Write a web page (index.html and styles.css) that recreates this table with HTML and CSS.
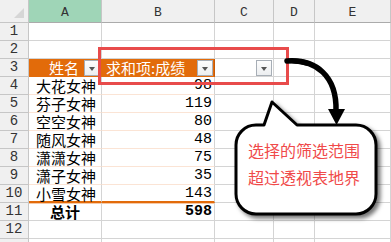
FILE: index.html
```html
<!DOCTYPE html>
<html lang="zh-CN">
<head>
    <meta charset="UTF-8">
    <title>数据透视表</title>
    <link rel="stylesheet" href="styles.css">
</head>
<body>
    <div class="sheet">
        <div class="grid">
            <div class="corner"><span class="select-all"></span></div>
            <div class="col-head active">A</div>
            <div class="col-head">B</div>
            <div class="col-head">C</div>
            <div class="col-head">D</div>
            <div class="col-head">E</div>

            <div class="row-head">1</div><div class="cell"></div><div class="cell"></div><div class="cell"></div><div class="cell"></div><div class="cell"></div>
            <div class="row-head">2</div><div class="cell"></div><div class="cell"></div><div class="cell"></div><div class="cell"></div><div class="cell"></div>

            <div class="row-head">3</div>
            <div class="cell pivot-head name-head">
                <span>姓名</span><span class="drop"></span>
            </div>
            <div class="cell pivot-head sum-head">
                <span>求和项:成绩</span><span class="drop"></span>
            </div>
            <div class="cell filter-cell"><span class="drop"></span></div>
            <div class="cell"></div><div class="cell"></div>

            <div class="row-head">4</div><div class="cell item">大花女神</div><div class="cell item num">98</div><div class="cell"></div><div class="cell"></div><div class="cell"></div>
            <div class="row-head">5</div><div class="cell item">芬子女神</div><div class="cell item num">119</div><div class="cell"></div><div class="cell"></div><div class="cell"></div>
            <div class="row-head">6</div><div class="cell item">空空女神</div><div class="cell item num">80</div><div class="cell"></div><div class="cell"></div><div class="cell"></div>
            <div class="row-head">7</div><div class="cell item">随风女神</div><div class="cell item num">48</div><div class="cell"></div><div class="cell"></div><div class="cell"></div>
            <div class="row-head">8</div><div class="cell item">潇潇女神</div><div class="cell item num">75</div><div class="cell"></div><div class="cell"></div><div class="cell"></div>
            <div class="row-head">9</div><div class="cell item">潇子女神</div><div class="cell item num">35</div><div class="cell"></div><div class="cell"></div><div class="cell"></div>
            <div class="row-head">10</div><div class="cell item last">小雪女神</div><div class="cell item num last">143</div><div class="cell"></div><div class="cell"></div><div class="cell"></div>

            <div class="row-head">11</div><div class="cell total">总计</div><div class="cell total num">598</div><div class="cell"></div><div class="cell"></div><div class="cell"></div>
            <div class="row-head">12</div><div class="cell"></div><div class="cell"></div><div class="cell"></div><div class="cell"></div><div class="cell"></div>
            <div class="row-head stub"></div><div class="cell stub"></div><div class="cell stub"></div><div class="cell stub"></div><div class="cell stub"></div><div class="cell stub"></div>
        </div>

        <!-- selection frame around the filter range -->
        <div class="pick-frame"></div>

        <!-- arrow and speech bubble -->
        <svg class="notes" width="391" height="242" viewBox="0 0 391 242">
            <path class="arrow-line" d="M287 61 C316 59 337 76 336 111"/>
            <path class="arrow-tail" d="M287 59 C296 58 303 59 309 61 L308 66 C301 64 294 63 287 63 Z"/>
            <polygon class="arrow-head" points="328,109 345,109 336.5,125"/>
            <path class="bubble" d="M256 125 L264 125 L272 102 L297 125 L356 125
                A20 20 0 0 1 376 145 L376 194 A20 20 0 0 1 356 214
                L256 214 A20 20 0 0 1 236 194 L236 145 A20 20 0 0 1 256 125 Z"/>
        </svg>
        <div class="bubble-text">
            <p>选择的筛选范围</p>
            <p>超过透视表地界</p>
        </div>
    </div>
</body>
</html>
```

FILE: styles.css
```css
:root {
    --grid-line: #d4d4d4;
    --head-bg: #f0f0f0;
    --head-line: #c6c6c6;
    --active-head: #9fd5b7;
    --pivot-orange: #e26b0a;
    --row-line: #fbe4d5;
    --frame-red: #e84b4b;
    --note-red: #f04a4a;
}

* {
    box-sizing: border-box;
    margin: 0;
    padding: 0;
}

body {
    width: 391px;
    height: 242px;
    overflow: hidden;
    background: white;
    font-family: "Noto Sans CJK SC", sans-serif;
    color: #000;
}

.sheet {
    position: relative;
    width: 391px;
    height: 242px;
    overflow: hidden;
}

.grid {
    display: grid;
    grid-template-columns: 29px 73px 113px 59px 41px 76px;
    grid-template-rows: 23px repeat(12, 18px) 3px;
}

/* headers */
.corner,
.col-head,
.row-head {
    background: var(--head-bg);
    border-right: 1px solid var(--head-line);
    border-bottom: 1px solid var(--head-line);
    color: #333;
    font-family: "Liberation Mono", monospace;
}

.corner {
    position: relative;
}

.select-all {
    position: absolute;
    right: 4px;
    bottom: 4px;
    width: 0;
    height: 0;
    border-left: 10px solid transparent;
    border-bottom: 10px solid #d6d6d6;
}

.col-head {
    display: flex;
    align-items: center;
    justify-content: center;
    padding-top: 3px;
    font-size: 13px;
    border-bottom-color: #ababab;
}

.col-head.active {
    background: var(--active-head);
}

.row-head {
    display: flex;
    align-items: center;
    justify-content: center;
    font-size: 14px;
    line-height: 17px;
}

/* cells */
.cell {
    border-right: 1px solid var(--grid-line);
    border-bottom: 1px solid var(--grid-line);
    font-size: 15px;
    line-height: 17px;
    white-space: nowrap;
}

.stub {
    border-bottom: none;
}

.pivot-head {
    display: flex;
    align-items: center;
    background: var(--pivot-orange);
    color: white;
    border-bottom-color: var(--pivot-orange);
}

.name-head {
    justify-content: flex-end;
    gap: 5px;
    padding-right: 1px;
    border-right-color: var(--pivot-orange);
}

.sum-head {
    padding-left: 4px;
    padding-right: 1px;
    border-right-color: #c55a08;
}

.sum-head .drop {
    margin-left: auto;
}

.filter-cell {
    display: flex;
    align-items: center;
    justify-content: flex-end;
    padding-right: 1px;
}

.drop {
    position: relative;
    width: 16px;
    height: 16px;
    background: linear-gradient(#fdfdfd, #eceef0);
    border: 1px solid #a7aeb6;
}

.drop::after {
    content: "";
    position: absolute;
    left: 4px;
    top: 6px;
    border-left: 3.5px solid transparent;
    border-right: 3.5px solid transparent;
    border-top: 4px solid #555;
}

.item {
    padding-left: 7px;
    border-bottom-color: var(--row-line);
}

.item.last {
    border-bottom: 2px solid var(--pivot-orange);
}

.num {
    padding-left: 0;
    padding-right: 2px;
    text-align: right;
    font-family: "Liberation Mono", monospace;
}

.total {
    font-weight: bold;
    text-align: center;
    box-shadow: inset 0 1px 0 #f7c9a6;
}

.total.num {
    text-align: right;
}

/* overlays */
.pick-frame {
    position: absolute;
    left: 98px;
    top: 47px;
    width: 191px;
    height: 38px;
    border: 3px solid var(--frame-red);
}

.notes {
    position: absolute;
    left: 0;
    top: 0;
    pointer-events: none;
}

.arrow-line {
    fill: none;
    stroke: #000;
    stroke-width: 5.5;
    stroke-linecap: round;
}

.arrow-tail,
.arrow-head {
    fill: #000;
}

.bubble {
    fill: white;
    stroke: #000;
    stroke-width: 3;
    stroke-linejoin: round;
    filter: drop-shadow(3px 3px 2px rgba(0, 0, 0, 0.55));
}

.bubble-text {
    position: absolute;
    left: 248px;
    top: 137px;
    color: var(--note-red);
    font-size: 16px;
    line-height: 27px;
    white-space: nowrap;
}
```
